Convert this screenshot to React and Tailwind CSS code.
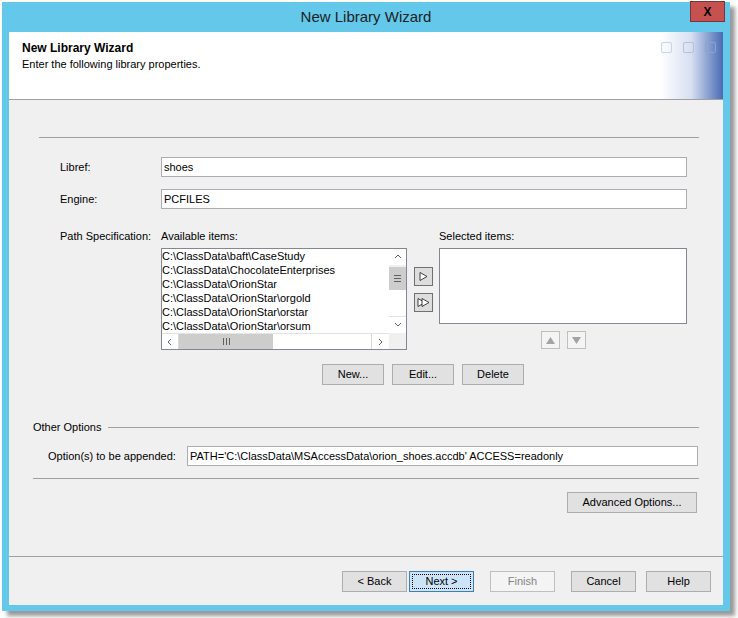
import { useState } from "react";

const availableItems = [
  "C:\\ClassData\\baft\\CaseStudy",
  "C:\\ClassData\\ChocolateEnterprises",
  "C:\\ClassData\\OrionStar",
  "C:\\ClassData\\OrionStar\\orgold",
  "C:\\ClassData\\OrionStar\\orstar",
  "C:\\ClassData\\OrionStar\\orsum",
];

const Chevron = ({ dir }) => {
  const paths = {
    up: "M1 5 L4 2 L7 5",
    down: "M1 2 L4 5 L7 2",
    left: "M5 1 L2 4 L5 7",
    right: "M2 1 L5 4 L2 7",
  };
  return (
    <svg width="8" height="8" viewBox="0 0 8 8">
      <path d={paths[dir]} fill="none" stroke="#606060" strokeWidth="1" />
    </svg>
  );
};

const Btn = ({ children, className = "" }) => (
  <button
    className={`h-[21px] border border-[#adadad] bg-[#e1e1e1] text-[11px] leading-none text-black ${className}`}
  >
    {children}
  </button>
);

const Field = ({ value, className = "" }) => (
  <div
    className={`h-[20px] border border-[#abadb3] bg-white pl-[2px] text-[11px] leading-[18px] whitespace-nowrap overflow-hidden ${className}`}
  >
    {value}
  </div>
);

const AddButton = ({ double }) => (
  <div className="w-[19px] h-[19px] border border-[#707070] bg-[#dddddd] flex items-center justify-center">
    <svg width={double ? 13 : 9} height="9" viewBox={double ? "0 0 13 9" : "0 0 9 9"}>
      <polygon points="1,0.5 8,4.5 1,8.5" fill="#ffffff" stroke="#2b2b2b" strokeWidth="0.9" />
      {double && <polygon points="5,0.5 12,4.5 5,8.5" fill="#ffffff" stroke="#2b2b2b" strokeWidth="0.9" />}
    </svg>
  </div>
);

const MoveButton = ({ down }) => (
  <div className="w-[19px] h-[18px] border border-[#bfbfbf] bg-[#f4f4f4] flex items-center justify-center">
    <svg width="9" height="7" viewBox="0 0 9 7">
      <polygon points={down ? "0,0 9,0 4.5,7" : "0,7 9,7 4.5,0"} fill="#a3a3a3" />
    </svg>
  </div>
);

const AvailableList = () => (
  <div className="w-[246px] h-[102px] border border-[#828790] bg-white grid grid-cols-[227px_17px] grid-rows-[84px_16px]">
    <div className="overflow-hidden leading-[14px] text-[11px] whitespace-nowrap">
      {availableItems.map((item) => (
        <div key={item}>{item}</div>
      ))}
    </div>
    <div className="flex flex-col bg-[#f0f0f0]">
      <div className="h-[16px] flex items-center justify-center bg-white">
        <Chevron dir="up" />
      </div>
      <div className="mt-[2px] h-[23px] bg-[#cdcdcd] flex flex-col items-center justify-center gap-[2px]">
        <div className="w-[7px] h-px bg-[#606060]" />
        <div className="w-[7px] h-px bg-[#606060]" />
        <div className="w-[7px] h-px bg-[#606060]" />
      </div>
      <div className="flex-1 bg-white" />
      <div className="h-[17px] border-t border-[#e3e3e3] flex items-center justify-center bg-white">
        <Chevron dir="down" />
      </div>
    </div>
    <div className="flex border-t border-[#e3e3e3] bg-white">
      <div className="w-[17px] flex items-center justify-center border-r border-[#d9d9d9]">
        <Chevron dir="left" />
      </div>
      <div className="w-[94px] bg-[#cdcdcd] flex items-center justify-center gap-[2px]">
        <div className="w-px h-[7px] bg-[#606060]" />
        <div className="w-px h-[7px] bg-[#606060]" />
        <div className="w-px h-[7px] bg-[#606060]" />
      </div>
      <div className="flex-1 border-r border-[#d9d9d9]" />
      <div className="w-[17px] flex items-center justify-center">
        <Chevron dir="right" />
      </div>
    </div>
    <div className="bg-[#f0f0f0]" />
  </div>
);

const App = () => {
  const [step] = useState(1);

  return (
    <div className="w-[738px] h-[618px] bg-white overflow-hidden font-['Liberation_Sans',Arial,sans-serif] text-[11px] text-black">
      <div className="relative ml-[2px] mt-[2px] w-[728px] h-[609px] bg-[#63c8ea] shadow-[5px_5px_4px_rgba(0,0,0,0.4)] flex flex-col">
        <div className="h-[30px] flex items-center justify-center text-[15px] text-[#1e1e1e]">
          New Library Wizard
        </div>
        <div className="absolute top-[-1px] right-[5px] w-[35px] h-[21px] bg-[#c75050] border border-[#7a3434] flex items-center justify-center text-[12px] font-bold">
          X
        </div>

        <div className="mx-[7px] h-[573px] bg-[#f0f0f0] flex flex-col">
          {/* header */}
          <div className="h-[68px] bg-white border-b border-[#a0a0a0] flex">
            <div className="flex-1 pl-[13px] pt-[8px]">
              <div className="text-[12px] font-bold leading-[16px]">New Library Wizard</div>
              <div className="text-[11px] leading-[17px]">Enter the following library properties.</div>
            </div>
            <div className="w-[63px] bg-linear-to-r from-white via-[#d7dff0] to-[#4a6bb3] flex items-start gap-[11px] pl-[1px] pt-[10px]">
              <div className="w-[11px] h-[11px] rounded-[2px] border border-[#c9d3ea]" />
              <div className="w-[11px] h-[11px] rounded-[2px] border border-[#b3c0de]" />
              <div className="w-[11px] h-[11px] rounded-[2px] border border-[#8ea2cf]" />
            </div>
          </div>

          {/* body */}
          <div className="mt-[37px] ml-[30px] mr-[24px] border-t border-[#a0a0a0]" />

          <div className="mt-[19px] ml-[51px] flex items-center">
            <div className="w-[101px]">Libref:</div>
            <Field value="shoes" className="w-[526px]" />
          </div>
          <div className="mt-[12px] ml-[51px] flex items-center">
            <div className="w-[101px]">Engine:</div>
            <Field value="PCFILES" className="w-[526px]" />
          </div>

          <div className="mt-[21px] ml-[51px] flex items-start">
            <div className="w-[101px] leading-[13px]">Path Specification:</div>
            <div className="w-[246px]">
              <div className="h-[18px] leading-[13px]">Available items:</div>
              <AvailableList />
            </div>
            <div className="ml-[7px] pt-[37px] flex flex-col gap-[7px]">
              <AddButton />
              <AddButton double />
            </div>
            <div className="ml-[6px] w-[248px]">
              <div className="h-[18px] leading-[13px]">Selected items:</div>
              <div className="h-[76px] border border-[#828790] bg-white" />
              <div className="mt-[7px] flex justify-center gap-[7px]">
                <MoveButton />
                <MoveButton down />
              </div>
            </div>
          </div>

          <div className="mt-[14px] ml-[313px] flex gap-[8px]">
            <Btn className="w-[62px]">New...</Btn>
            <Btn className="w-[62px]">Edit...</Btn>
            <Btn className="w-[62px]">Delete</Btn>
          </div>

          <div className="mt-[36px] ml-[24px] mr-[24px] flex items-center leading-[13px]">
            <span>Other Options</span>
            <div className="flex-1 ml-[7px] border-t border-[#a0a0a0]" />
          </div>

          <div className="mt-[12px] ml-[39px] flex items-center">
            <div className="w-[139px]">Option(s) to be appended:</div>
            <Field
              value="PATH='C:\ClassData\MSAccessData\orion_shoes.accdb' ACCESS=readonly"
              className="w-[511px]"
            />
          </div>

          <div className="mt-[12px] ml-[24px] mr-[24px] border-t border-[#a0a0a0]" />

          <div className="mt-[13px] self-end mr-[26px]">
            <Btn className="w-[130px]">Advanced Options...</Btn>
          </div>

          {/* footer */}
          <div className="mt-auto h-[49px] border-t border-[#a0a0a0] pt-[14px] pl-[333px] flex items-start">
            <Btn className="w-[65px]">&lt; Back</Btn>
            <button className="ml-[2px] w-[65px] h-[21px] border border-[#3c7fb1] bg-[#cce4f7] p-[2px] text-[11px] leading-none">
              <div className="w-full h-full border border-dotted border-black flex items-center justify-center">
                Next &gt;
              </div>
            </button>
            <button
              disabled={step === 1}
              className="ml-[16px] w-[65px] h-[21px] border border-[#bfbfbf] bg-[#f4f4f4] text-[11px] leading-none text-[#838383]"
            >
              Finish
            </button>
            <Btn className="ml-[16px] w-[65px]">Cancel</Btn>
            <Btn className="ml-[10px] w-[65px]">Help</Btn>
          </div>
        </div>
      </div>
    </div>
  );
};

export default App;
